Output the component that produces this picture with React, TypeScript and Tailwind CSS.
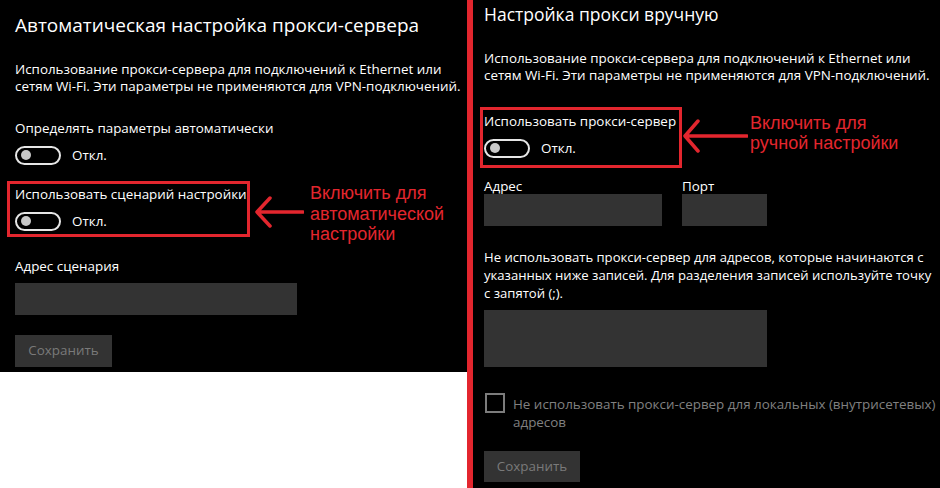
const ui = "font-['Open_Sans','Noto_Sans',sans-serif]";
const note = "font-['Liberation_Sans',Arial,sans-serif] text-[18px] text-[#e3262e]";

function Toggle() {
    return (
        <div className="flex items-center h-[20px]">
            <div className="w-[46px] h-[19px] rounded-full border-2 border-[#e6e6e6] flex items-center pl-[4px]">
                <div className="w-[10px] h-[10px] rounded-full bg-[#c8c8c8]" />
            </div>
            <span className="ml-[11px] text-[13.4px] text-white">Откл.</span>
        </div>
    )
}

function Arrow({ w, h }: { w: number, h: number }) {
    const m = h / 2
    return (
        <svg width={w} height={h} viewBox={`0 0 ${w} ${h}`} className="shrink-0">
            <path d={`M3 ${m} L${w - 1} ${m} M${16} ${3} L3 ${m} L16 ${h - 3}`} stroke="#e3262e" strokeWidth="3.5" fill="none" strokeLinecap="round" strokeLinejoin="round" />
        </svg>
    )
}

export default function App() {
    return (
        <div className={`w-[940px] h-[488px] flex overflow-hidden whitespace-nowrap ${ui}`}>
            <div className="w-[467px] shrink-0 flex flex-col">
                <div className="h-[372px] bg-black pl-[15px] text-white">
                    <h1 className="mt-[11px] text-[19px] leading-[28px] font-normal">Автоматическая настройка прокси-сервера</h1>
                    <p className="mt-[22px] text-[13.4px] leading-[17px]">
                        Использование прокси-сервера для подключений к Ethernet или<br />
                        сетям Wi-Fi. Эти параметры не применяются для VPN-подключений.
                    </p>
                    <div className="mt-[23px] text-[13.4px] leading-[20px]">Определять параметры автоматически</div>
                    <div className="mt-[7px]"><Toggle /></div>
                    <div className="mt-[16px] flex items-start">
                        <div className="ml-[-8px] w-[243px] border-[3px] border-[#e3262e] pl-[5px] pb-[3px]">
                            <div className="text-[13.4px] leading-[20px]">Использовать сценарий настройки</div>
                            <div className="mt-[7px]"><Toggle /></div>
                        </div>
                        <div className="mt-[14px] ml-[4px]"><Arrow w={50} h={34} /></div>
                        <div className={`ml-[6px] mt-[2px] leading-[20.5px] ${note}`}>
                            Включить для<br />автоматической<br />настройки
                        </div>
                    </div>
                    <div className="mt-[11px] text-[13.4px] leading-[20px]">Адрес сценария</div>
                    <div className="mt-[7px] w-[282px] h-[32px] bg-[#333333]" />
                    <button className="mt-[20px] w-[97px] h-[32px] bg-[#333333] text-[13.4px] text-[#7a7a7a] block">Сохранить</button>
                </div>
                <div className="flex-1 bg-white" />
            </div>
            <div className="w-[6px] shrink-0 bg-[#e3262e]" />
            <div className="flex-1 min-w-0 bg-black pl-[11px] text-white">
                <h1 className="mt-0 text-[17.5px] leading-[28px] font-normal">Настройка прокси вручную</h1>
                <p className="mt-[22px] text-[13.4px] leading-[16.5px]">
                    Использование прокси-сервера для подключений к Ethernet или<br />
                    сетям Wi-Fi. Эти параметры не применяются для VPN-подключений.
                </p>
                <div className="mt-[24px] flex items-start">
                    <div className="ml-[-4px] w-[202px] border-[3px] border-[#e3262e] pl-[1px] pt-[1px] pb-[7px]">
                        <div className="text-[13.4px] leading-[20px]">Использовать прокси-сервер</div>
                        <div className="mt-[7px]"><Toggle /></div>
                    </div>
                    <div className="mt-[11px]"><Arrow w={66} h={36} /></div>
                    <div className={`ml-[2px] mt-[6px] leading-[20px] ${note}`}>
                        Включить для<br />ручной настройки
                    </div>
                </div>
                <div className="mt-[10px] flex gap-[20px]">
                    <div className="w-[178px]">
                        <div className="text-[13.4px] leading-[16px]">Адрес</div>
                        <div className="h-[32px] bg-[#333333]" />
                    </div>
                    <div className="w-[85px]">
                        <div className="text-[13.4px] leading-[16px]">Порт</div>
                        <div className="h-[32px] bg-[#333333]" />
                    </div>
                </div>
                <p className="mt-[22px] text-[13.1px] leading-[18px]">
                    Не использовать прокси-сервер для адресов, которые начинаются с<br />
                    указанных ниже записей. Для разделения записей используйте точку<br />
                    с запятой (;).
                </p>
                <div className="mt-[8px] w-[283px] h-[57px] bg-[#333333]" />
                <div className="mt-[26px] flex items-start">
                    <div className="ml-[1px] w-[20px] h-[20px] border-2 border-[#7c7c7c] shrink-0" />
                    <div className="ml-[8px] mt-[2px] text-[13.4px] leading-[18px] text-[#808080]">
                        Не использовать прокси-сервер для локальных (внутрисетевых)<br />адресов
                    </div>
                </div>
                <button className="mt-[20px] w-[96px] h-[31px] bg-[#333333] text-[13.4px] text-[#7a7a7a] block">Сохранить</button>
            </div>
        </div>
    )
}
